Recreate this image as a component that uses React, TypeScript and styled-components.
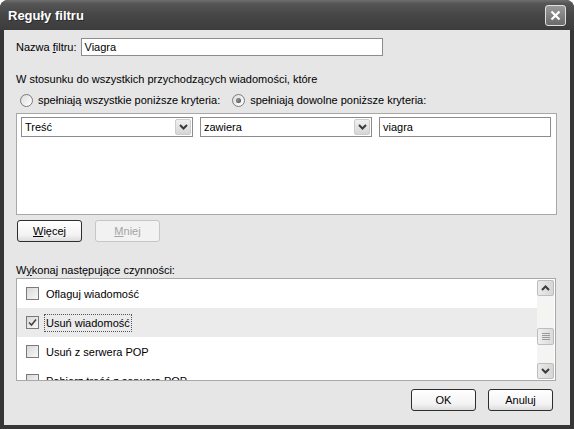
import styled, { createGlobalStyle } from "styled-components";

const GlobalStyle = createGlobalStyle`
  html, body {
    margin: 0;
    padding: 0;
    background: #ffffff;
  }
  body {
    font-family: "Liberation Sans", Arial, sans-serif;
    font-size: 11px;
    color: #000;
  }
`;

const Chevron = ({ up }: { up?: boolean }) => (
  <svg width="9" height="6" viewBox="0 0 9 6">
    <path
      d={up ? "M1 5 L4.5 1.5 L8 5" : "M1 1 L4.5 4.5 L8 1"}
      fill="none"
      stroke="#3a3a3a"
      strokeWidth="2"
    />
  </svg>
);

const CloseIcon = () => (
  <svg width="11" height="11" viewBox="0 0 11 11">
    <path d="M1.5 1.5 L9.5 9.5 M9.5 1.5 L1.5 9.5" stroke="#fff" strokeWidth="2.2" />
  </svg>
);

const CheckIcon = () => (
  <svg width="9" height="9" viewBox="0 0 9 9">
    <path d="M1 4.5 L3.5 7 L8 1.5" fill="none" stroke="#444" strokeWidth="1.6" />
  </svg>
);

const Combo = ({ value }: { value: string }) => (
  <Select>
    <span>{value}</span>
    <DropBtn>
      <Chevron />
    </DropBtn>
  </Select>
);

const actions = [
  "Oflaguj wiadomość",
  "Usuń wiadomość",
  "Usuń z serwera POP",
  "Pobierz treść z serwera POP",
];

export default function App() {
  return (
    <>
      <GlobalStyle />
      <Window>
        <TitleBar>
          <Title>Reguły filtru</Title>
          <CloseBtn>
            <CloseIcon />
          </CloseBtn>
        </TitleBar>
        <Body>
          <NameRow>
            <span>
              Nazwa <u>f</u>iltru:
            </span>
            <TextField $width={302}>Viagra</TextField>
          </NameRow>

          <Intro>W stosunku do wszystkich przychodzących wiadomości, które</Intro>

          <RadioRow>
            <RadioItem>
              <Radio />
              spełniają wszystkie poniższe kryteria:
            </RadioItem>
            <RadioItem>
              <Radio $checked />
              spełniają dowolne poniższe kryteria:
            </RadioItem>
          </RadioRow>

          <CriteriaBox>
            <Combo value="Treść" />
            <Combo value="zawiera" />
            <TextField $width={172} $height={20}>
              viagra
            </TextField>
          </CriteriaBox>

          <ButtonRow>
            <Button>
              <u>W</u>ięcej
            </Button>
            <Button $disabled>
              <u>M</u>niej
            </Button>
          </ButtonRow>

          <SectionLabel>
            W<u>y</u>konaj następujące czynności:
          </SectionLabel>

          <ListBox>
            <Items>
              {actions.map((a, i) => (
                <Item key={a} $selected={i === 1}>
                  <Checkbox>{i === 1 ? <CheckIcon /> : null}</Checkbox>
                  <ItemText $focus={i === 1}>{a}</ItemText>
                </Item>
              ))}
            </Items>
            <ScrollBar>
              <ScrollBtn>
                <Chevron up />
              </ScrollBtn>
              <Track>
                <Thumb>
                  <Grip />
                  <Grip />
                  <Grip />
                  <Grip />
                </Thumb>
              </Track>
              <ScrollBtn>
                <Chevron />
              </ScrollBtn>
            </ScrollBar>
          </ListBox>

          <Footer>
            <Button>OK</Button>
            <Button>Anuluj</Button>
          </Footer>
        </Body>
      </Window>
    </>
  );
}

const Window = styled.div`
  width: 574px;
  height: 429px;
  display: flex;
  flex-direction: column;
  background: #363636;
  border-radius: 8px 8px 0 0;
  overflow: hidden;
`;

const TitleBar = styled.div`
  height: 30px;
  flex-shrink: 0;
  display: flex;
  align-items: center;
  justify-content: space-between;
  padding: 0 8px;
  background: linear-gradient(#6e6e6e 0%, #555555 12%, #464646 50%, #3c3c3c 100%);
`;

const Title = styled.div`
  color: #fff;
  font-weight: bold;
  font-size: 13px;
  text-shadow: 1px 1px 0 #2a2a2a;
`;

const CloseBtn = styled.div`
  width: 19px;
  height: 19px;
  margin-top: 1px;
  border: 1px solid #e0e0e0;
  border-radius: 3px;
  display: flex;
  align-items: center;
  justify-content: center;
  background: linear-gradient(#9a9a9a, #6a6a6a);
`;

const Body = styled.div`
  flex: 1;
  margin: 0 4px 4px 4px;
  background: #e6e6e6;
  padding: 8px 13px 0 12px;
  display: flex;
  flex-direction: column;
`;

const NameRow = styled.div`
  display: flex;
  align-items: center;
  gap: 4px;
  height: 18px;
`;

const TextField = styled.div<{ $width: number; $height?: number }>`
  width: ${(p) => p.$width}px;
  height: ${(p) => p.$height ?? 18}px;
  box-sizing: border-box;
  border: 1px solid #8c8c8c;
  background: #fff;
  padding: 0 3px 1px;
  display: flex;
  align-items: center;
  line-height: 14px;
`;

const Intro = styled.div`
  margin-top: 16px;
  line-height: 14px;
`;

const RadioRow = styled.div`
  margin-top: 7px;
  height: 14px;
  display: flex;
  align-items: center;
  gap: 12px;
  padding-left: 4px;
`;

const RadioItem = styled.div`
  display: flex;
  align-items: center;
  gap: 5px;
`;

const Radio = styled.span<{ $checked?: boolean }>`
  width: 13px;
  height: 13px;
  box-sizing: border-box;
  border-radius: 50%;
  border: 1px solid #7a7a7a;
  background: linear-gradient(135deg, #dcdcdc, #ffffff);
  position: relative;
  &::after {
    content: "";
    display: ${(p) => (p.$checked ? "block" : "none")};
    position: absolute;
    left: 3px;
    top: 3px;
    width: 5px;
    height: 5px;
    border-radius: 50%;
    background: radial-gradient(circle at 40% 40%, #9a9a9a, #3a3a3a);
  }
`;

const CriteriaBox = styled.div`
  margin-top: 6px;
  height: 102px;
  box-sizing: border-box;
  border: 1px solid #a8a8a8;
  background: #fff;
  padding: 3px 4px;
  display: flex;
  align-items: flex-start;
  gap: 7px;
`;

const Select = styled.div`
  width: 172px;
  height: 20px;
  box-sizing: border-box;
  border: 1px solid #8c8c8c;
  background: #fff;
  display: flex;
  align-items: center;
  justify-content: space-between;
  padding: 0 1px 0 3px;
`;

const DropBtn = styled.div`
  width: 16px;
  height: 16px;
  box-sizing: border-box;
  border: 1px solid #cccccc;
  border-radius: 2px;
  background: linear-gradient(#f0f0f0, #d6d6d6);
  display: flex;
  align-items: center;
  justify-content: center;
`;

const ButtonRow = styled.div`
  margin-top: 5px;
  margin-left: 1px;
  display: flex;
  gap: 13px;
`;

const Button = styled.div<{ $disabled?: boolean }>`
  width: 65px;
  height: 22px;
  box-sizing: border-box;
  border: 1px solid ${(p) => (p.$disabled ? "#c6c6c6" : "#2e2e2e")};
  border-radius: 3px;
  font-weight: normal;
  color: ${(p) => (p.$disabled ? "#a4a4a4" : "#000")};
  background: ${(p) =>
    p.$disabled ? "#f2f2f2" : "linear-gradient(#ffffff, #f3f3f3 70%, #dcdcdc)"};
  display: flex;
  align-items: center;
  justify-content: center;
`;

const SectionLabel = styled.div`
  margin-top: 21px;
  line-height: 14px;
`;

const ListBox = styled.div`
  margin-top: 1px;
  margin-right: 1px;
  height: 103px;
  box-sizing: border-box;
  border: 1px solid #a8a8a8;
  background: #fff;
  display: flex;
`;

const Items = styled.div`
  flex: 1;
  overflow: hidden;
`;

const Item = styled.div<{ $selected?: boolean }>`
  height: 29px;
  display: flex;
  align-items: center;
  gap: 5px;
  padding-left: 9px;
  background: ${(p) => (p.$selected ? "#ebebeb" : "#fff")};
`;

const Checkbox = styled.span`
  width: 13px;
  height: 13px;
  box-sizing: border-box;
  border: 1px solid #7a7a7a;
  background: linear-gradient(135deg, #d8d8d8, #f8f8f8);
  display: flex;
  align-items: center;
  justify-content: center;
`;

const ItemText = styled.span<{ $focus?: boolean }>`
  padding: 2px 1px;
  border: 1px dotted ${(p) => (p.$focus ? "#555" : "transparent")};
`;

const ScrollBar = styled.div`
  width: 17px;
  margin: 1px 1px 1px 0;
  display: flex;
  flex-direction: column;
  background: #f4f4f2;
`;

const ScrollBtn = styled.div`
  height: 16px;
  box-sizing: border-box;
  border: 1px solid #bdbdbd;
  border-radius: 2px;
  background: linear-gradient(90deg, #eaeaea, #d6d6d6);
  display: flex;
  align-items: center;
  justify-content: center;
`;

const Track = styled.div`
  flex: 1;
  display: flex;
  flex-direction: column;
  padding-top: 32px;
`;

const Thumb = styled.div`
  height: 17px;
  box-sizing: border-box;
  border: 1px solid #bdbdbd;
  border-radius: 2px;
  background: linear-gradient(90deg, #f0f0f0, #dadada);
  display: flex;
  flex-direction: column;
  align-items: center;
  justify-content: center;
  gap: 1px;
`;

const Grip = styled.span`
  width: 8px;
  height: 1px;
  background: #9a9a9a;
`;

const Footer = styled.div`
  margin-top: 8px;
  margin-right: 4px;
  display: flex;
  justify-content: flex-end;
  gap: 12px;
`;
